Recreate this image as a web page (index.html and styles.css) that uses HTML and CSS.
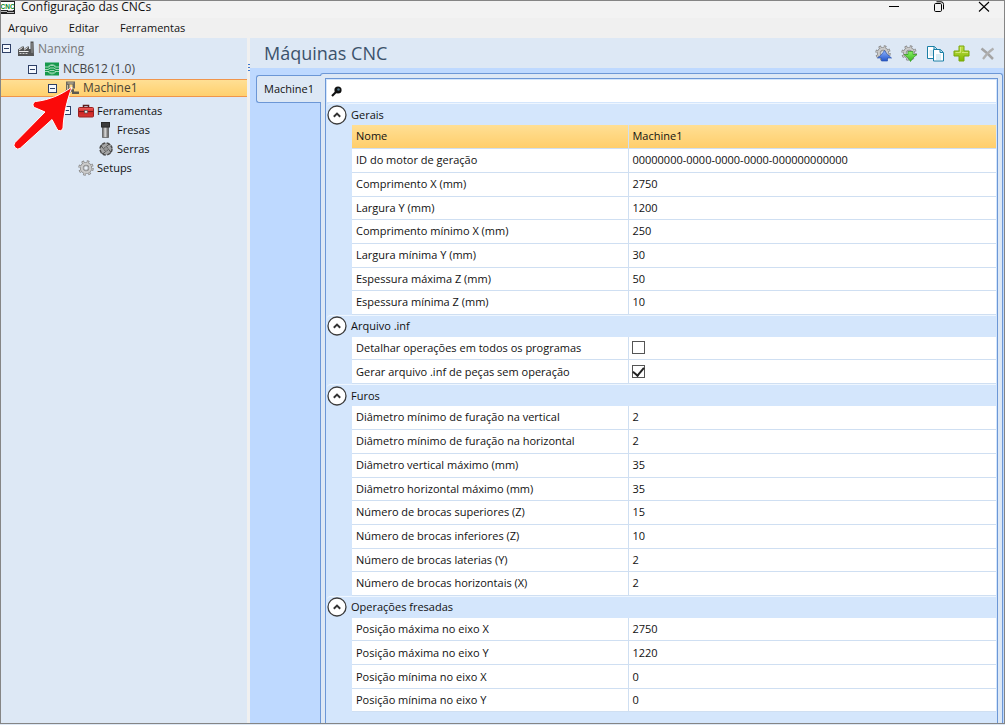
FILE: index.html
```html
<!DOCTYPE html>
<html lang="pt-BR">
<head>
<meta charset="utf-8">
<title>Configuração das CNCs</title>
<link rel="stylesheet" href="styles.css">
</head>
<body>
<svg width="0" height="0" class="defs" aria-hidden="true">
  <defs>
    <linearGradient id="blue" x1="0" y1="0" x2="0" y2="1"><stop offset="0" stop-color="#8db4ff"/><stop offset="1" stop-color="#2455c8"/></linearGradient>
    <linearGradient id="green" x1="0" y1="0" x2="0" y2="1"><stop offset="0" stop-color="#8af064"/><stop offset="1" stop-color="#35b41c"/></linearGradient>
    <linearGradient id="plus" x1="0" y1="0" x2="0" y2="1"><stop offset="0" stop-color="#c4e04c"/><stop offset="1" stop-color="#7fb800"/></linearGradient>
    <linearGradient id="steel" x1="0" y1="0" x2="1" y2="0"><stop offset="0" stop-color="#555"/><stop offset=".45" stop-color="#ddd"/><stop offset="1" stop-color="#4a4a4a"/></linearGradient>
    <linearGradient id="case" x1="0" y1="0" x2="0" y2="1"><stop offset="0" stop-color="#f0605c"/><stop offset=".5" stop-color="#cc2424"/><stop offset="1" stop-color="#d83a36"/></linearGradient>
    <symbol id="gear" viewBox="0 0 16 16">
      <g fill="none" stroke="#858585">
        <circle cx="8" cy="8" r="6.4" stroke-width="2.6" stroke-dasharray="2.5 2.526"/>
        <circle cx="8" cy="8" r="4.3" stroke-width="3.6"/>
        <circle cx="8" cy="8" r="6.2" stroke="#c9c9c9" stroke-width="1.6" stroke-dasharray="1.4 3.469" stroke-dashoffset="-.5"/>
        <circle cx="8" cy="8" r="4.3" stroke="#cbcbcb" stroke-width="2.2"/>
      </g>
      <circle cx="8" cy="8" r="2.3" fill="#e8eef6" stroke="#8a8a8a" stroke-width=".8"/>
    </symbol>
    <symbol id="chevron" viewBox="0 0 20 20">
      <circle cx="10" cy="10" r="9" fill="#fff" stroke="#3c3c3c" stroke-width="1.3"/>
      <path d="M6.8 11.8 10 8.6l3.2 3.2" fill="none" stroke="#333" stroke-width="2"/>
    </symbol>
  </defs>
</svg>
<div class="window">
  <header class="titlebar">
    <svg class="app-icon" width="14" height="13" viewBox="0 0 14 13" aria-hidden="true">
      <rect width="14" height="13" fill="#222"/><rect y="1" width="13" height="8" fill="#fff"/>
      <text x="-.5" y="7.6" font-size="6.5" class="app-icon-text">CNC</text>
      <path d="M0 10.5h6M7 9.5h5M6 11.5h7" stroke="#b8b8b8"/>
    </svg>
    <h1 class="app-title">Configuração das CNCs</h1>
    <div class="window-buttons">
      <button type="button" aria-label="Minimizar"><svg width="12" height="12" viewBox="0 0 12 12"><path d="M1 5.5h10" stroke="#000"/></svg></button>
      <button type="button" aria-label="Restaurar"><svg width="12" height="12" viewBox="0 0 12 12" fill="none" stroke="#000"><rect x="1.5" y="2.5" width="7" height="8" rx="1.2"/><path d="M3.5.8h4.5a2.5 2.5 0 0 1 2.5 2.5v5"/></svg></button>
      <button type="button" aria-label="Fechar"><svg width="12" height="12" viewBox="0 0 12 12"><path d="M1 1l10 9.500M11 1L1 10.500" stroke="#000" stroke-width="1.1"/></svg></button>
    </div>
  </header>
  <nav class="menubar">
    <button type="button">Arquivo</button>
    <button type="button">Editar</button>
    <button type="button">Ferramentas</button>
  </nav>
  <div class="workspace">
    <aside class="tree">
      <div class="node root"><button type="button" class="toggle" aria-label="Recolher Nanxing"></button>
        <svg width="16" height="16" viewBox="0 0 16 16"><path d="M0 15V8.500L4 5.500h2V8l3.500-2.500H11V8h1.500V.5h3L16 15z" fill="#555"/><path d="M1 9 4.500 6.500M6.200 9 9.700 6.500M1 10.500h9.500" stroke="#eee" stroke-width="1"/><path d="M1.500 12.500h9" stroke="#ccc" stroke-width="1.200" stroke-dasharray="2 1"/><path d="M14 2v10" stroke="#999"/></svg>
        <span>Nanxing</span></div>
      <div class="node controller"><button type="button" class="toggle" aria-label="Recolher NCB612"></button>
        <svg width="14" height="14" viewBox="0 0 14 14"><rect y=".5" width="14" height="13" fill="#17994c"/><g stroke="#b5e2c6" fill="none" stroke-width=".9"><path d="M0 5h3.500L5.500 3.500h3L10.500 5H14M0 7.500h3l2-1.500h4l2 1.500h3M0 9.500h4L5.500 11h3L10 9.500h4M4.500 8.500h5"/><path d="M3 4.500Q7 .5 11 4.500M3 10q4 4 8 0" stroke-width=".6"/></g></svg>
        <span>NCB612 (1.0)</span></div>
      <div class="node machine"><button type="button" class="toggle" aria-label="Recolher Machine1"></button>
        <svg width="14" height="14" viewBox="0 0 14 14"><path d="M1 .5h9v7H7.500v-4H4.500V9H6v3H0V9.500h1z" fill="#6c6960"/><path d="M2.500 2h6M2.500 4v5" stroke="#c9bfa4"/><path d="M6 9.500h3M7 11.800h7" stroke="#5d5a50" stroke-width="2.500"/></svg>
        <span>Machine1</span></div>
      <div class="children">
        <div class="node tools"><button type="button" class="toggle" aria-label="Recolher Ferramentas"></button>
          <svg width="16" height="14" viewBox="0 0 16 14"><path d="M5.500 4V1.500h5V4" fill="none" stroke="#5a1c1c" stroke-width="1.500"/><rect x=".5" y="3.500" width="15" height="9.500" rx="1" fill="url(#case)" stroke="#9a2020"/><path d="M1 7.500h14" stroke="#7b1717"/><rect x="6.500" y="6.500" width="3" height="2.500" fill="#eee" stroke="#555" stroke-width=".7"/></svg>
          <span>Ferramentas</span></div>
        <div class="node leaf">
          <svg width="14" height="16" viewBox="0 0 14 16"><path d="M3.500 5h6v10.500h-6z" fill="url(#steel)" stroke="#555" stroke-width=".7"/><rect x="2.500" y=".5" width="8" height="4.500" fill="#3c3c3c" stroke="#2a2a2a"/></svg>
          <span>Fresas</span></div>
        <div class="node leaf">
          <svg width="14" height="14" viewBox="0 0 14 14"><circle cx="7" cy="7" r="6" fill="#a5a5a5" stroke="#4c4c4c" stroke-width="1.500" stroke-dasharray="3.200 1.510"/><path d="M7.500 4.500Q8.500 2 11.500 2.500M9.500 7.500q2.500 1 2 4M6.500 9.500q-1 2.500-4 2M4.500 6.500Q2 5.500 2.500 2.500" fill="none" stroke="#444" stroke-width=".9"/><circle cx="7" cy="7" r="2" fill="#e4e4e4" stroke="#444" stroke-width=".8"/><circle cx="7" cy="7" r=".8" fill="#333"/></svg>
          <span>Serras</span></div>
        <div class="node setups">
          <svg width="16" height="16"><use href="#gear"/></svg>
          <span>Setups</span></div>
      </div>
      <svg class="pointer" width="62" height="66" viewBox="0 0 62 66" aria-hidden="true"><path d="M59 3C48 11 36 16 22.500 17.500a3.300 3.300 0 0 0-1 6L32 28 2 58.500a3.900 3.900 0 0 0 5.500 5.500L39 35.500l5 9.500a3.200 3.200 0 0 0 6-1C50.500 31 54 16 59 3z" fill="#fb0a0a" stroke="#fff" stroke-width="1"/></svg>
    </aside>
    <div class="splitter"><span></span></div>
    <main class="panel">
      <div class="panel-head">
        <h2>Máquinas CNC</h2>
        <div class="actions">
          <button type="button" aria-label="Exportar"><svg width="17" height="17" viewBox="0 0 17 17"><use href="#gear" width="16" height="16"/><path d="M9.500 5.500Q12 10 16.500 13h-4v3h-6v-3h-4Q7 10 9.500 5.500z" fill="url(#blue)" stroke="#2c55b0" stroke-width=".7"/></svg></button>
          <button type="button" aria-label="Importar"><svg width="17" height="17" viewBox="0 0 17 17"><use href="#gear" width="16" height="16"/><path d="M9.500 16.500Q7.500 12.500 3 9.500h4v-3h5v3h4Q11.500 12.500 9.500 16.500z" fill="url(#green)" stroke="#32981e" stroke-width=".7"/></svg></button>
          <button type="button" aria-label="Copiar"><svg width="17" height="17" viewBox="0 0 17 17" fill="#fff" stroke="#1b7fa6"><path d="M.5 1.500h7l3 3v9H.5z"/><path d="M7 1.500v3h3" fill="#bfe3f2"/><path d="M2.500 6h4M2.500 8h4M2.500 10h4" stroke="#a9d2e2"/><path d="M6.500 4.500h7l3 3v8.500h-10z"/><path d="M13 4.500v3h3" fill="#bfe3f2"/><path d="M9 10h5M9 12h5M9 14h5" stroke="#b4dbe8"/></svg></button>
          <button type="button" aria-label="Adicionar"><svg width="17" height="17" viewBox="0 0 17 17"><path d="M6 1h5v5h5v5h-5v5H6v-5H1V6h5z" fill="url(#plus)" stroke="#79a60b"/><path d="M7.500 2v5.500H2.500M9 7.500h6" stroke="#dcf08a" fill="none" stroke-width=".8"/></svg></button>
          <button type="button" aria-label="Excluir"><svg width="17" height="17" viewBox="0 0 17 17"><path d="M2.500 3.500 8.500 8.500 14 14" fill="none" stroke="#a4a4a4" stroke-width="2.500"/><path d="M14.500 3.500Q9 7 4 14" fill="none" stroke="#b0b0b0" stroke-width="2.200"/></svg></button>
        </div>
      </div>
      <div class="tabs">
        <button type="button" class="tab">Machine1</button>
        <div class="page">
          <div class="properties">
            <label class="search"><svg width="11" height="11" viewBox="0 0 11 11"><circle cx="7" cy="4" r="3.600" fill="#111"/><path d="M5 6 1 10" stroke="#111" stroke-width="2.200"/><circle cx="7.500" cy="3.500" r="1.300" fill="#52788c"/></svg><input type="text" aria-label="Pesquisar"></label>
            <section class="group">
              <h3><button type="button" aria-label="Recolher"><svg width="20" height="20"><use href="#chevron"/></svg></button>Gerais</h3>
              <table>
                <tr class="selected"><th scope="row">Nome</th><td>Machine1</td></tr>
                <tr><th scope="row">ID do motor de geração</th><td>00000000-0000-0000-0000-000000000000</td></tr>
                <tr><th scope="row">Comprimento X (mm)</th><td>2750</td></tr>
                <tr><th scope="row">Largura Y (mm)</th><td>1200</td></tr>
                <tr><th scope="row">Comprimento mínimo X (mm)</th><td>250</td></tr>
                <tr><th scope="row">Largura mínima Y (mm)</th><td>30</td></tr>
                <tr><th scope="row">Espessura máxima Z (mm)</th><td>50</td></tr>
                <tr><th scope="row">Espessura mínima Z (mm)</th><td>10</td></tr>
              </table>
            </section>
            <section class="group">
              <h3><button type="button" aria-label="Recolher"><svg width="20" height="20"><use href="#chevron"/></svg></button>Arquivo .inf</h3>
              <table>
                <tr><th scope="row"><label for="detail">Detalhar operações em todos os programas</label></th><td><input type="checkbox" id="detail"></td></tr>
                <tr><th scope="row"><label for="inf">Gerar arquivo .inf de peças sem operação</label></th><td><input type="checkbox" id="inf" checked></td></tr>
              </table>
            </section>
            <section class="group">
              <h3><button type="button" aria-label="Recolher"><svg width="20" height="20"><use href="#chevron"/></svg></button>Furos</h3>
              <table>
                <tr><th scope="row">Diâmetro mínimo de furação na vertical</th><td>2</td></tr>
                <tr><th scope="row">Diâmetro mínimo de furação na horizontal</th><td>2</td></tr>
                <tr><th scope="row">Diâmetro vertical máximo (mm)</th><td>35</td></tr>
                <tr><th scope="row">Diâmetro horizontal máximo (mm)</th><td>35</td></tr>
                <tr><th scope="row">Número de brocas superiores (Z)</th><td>15</td></tr>
                <tr><th scope="row">Número de brocas inferiores (Z)</th><td>10</td></tr>
                <tr><th scope="row">Número de brocas laterias (Y)</th><td>2</td></tr>
                <tr><th scope="row">Número de brocas horizontais (X)</th><td>2</td></tr>
              </table>
            </section>
            <section class="group">
              <h3><button type="button" aria-label="Recolher"><svg width="20" height="20"><use href="#chevron"/></svg></button>Operações fresadas</h3>
              <table>
                <tr><th scope="row">Posição máxima no eixo X</th><td>2750</td></tr>
                <tr><th scope="row">Posição máxima no eixo Y</th><td>1220</td></tr>
                <tr><th scope="row">Posição mínima no eixo X</th><td>0</td></tr>
                <tr><th scope="row">Posição mínima no eixo Y</th><td>0</td></tr>
              </table>
            </section>
          </div>
        </div>
      </div>
    </main>
  </div>
</div>
</body>
</html>
```
FILE: styles.css
```css
* { box-sizing: border-box; }

body {
  margin: 0;
  background: #dde8f5;
  color: #111;
  font: 11px/16px "Open Sans", "Noto Sans", sans-serif;
}

h1, h2, h3 { margin: 0; font-weight: 400; }
button { padding: 0; border: 0; background: none; color: inherit; font: inherit; }
svg { display: block; flex: none; }
.defs { position: absolute; }

.window {
  display: flex;
  flex-direction: column;
  min-height: calc(100vh - 1px);
  border: 1px solid #858585;
}

.titlebar {
  display: flex;
  align-items: center;
  height: 17px;
  padding-bottom: 5px;
  background: #f3f3f3;
}
.app-icon-text { fill: #0a8a2a; font-family: "Liberation Sans", sans-serif; font-weight: 700; }
.app-title { flex: 1; margin-left: 6px; font-size: 12px; line-height: 12px; }
.window-buttons { display: flex; gap: 33px; padding-right: 14px; }

.menubar {
  display: flex;
  align-items: center;
  gap: 21px;
  height: 20px;
  padding-left: 7px;
  background: #f0f0f0;
}

.workspace { display: flex; flex: 1; }

.tree {
  position: relative;
  flex: none;
  width: 246px;
  background: #dde8f5;
  font-size: 12px;
}
.node { display: flex; align-items: center; gap: 4px; height: 19px; }
.toggle {
  flex: none;
  width: 9px;
  height: 9px;
  border: 1px solid #2d3f66;
  background: linear-gradient(#2d3f66, #2d3f66) center / 5px 1px no-repeat #f4f8fd;
}
.root { height: 21px; padding-left: 1px; color: #777; }
.root .toggle { margin-right: 3px; }
.controller { height: 20px; padding-left: 27px; color: #444; }
.controller .toggle { margin-right: 4px; }
.machine {
  height: 18px;
  padding-left: 47px;
  border: solid #f0954b;
  border-width: 1px 0;
  background: linear-gradient(#ffdf94, #ffd06e);
  color: #4a4436;
}
.machine .toggle { margin-right: 4px; }
.children { padding-top: 4px; font-size: 11px; }
.tools { gap: 3px; padding-left: 61px; }
.tools .toggle { margin-right: 4px; }
.leaf { padding-left: 98px; }
.setups { gap: 3px; padding-left: 77px; }
.pointer { position: absolute; top: 46px; left: 12px; }

.splitter { flex: none; width: 3px; padding-top: 26px; background: #f0f0f0; }
.splitter span { display: block; width: 2px; height: 9px; margin-left: 1px; background: repeating-linear-gradient(#3f78d0 0 1px, transparent 1px 3px); }

.panel { display: flex; flex: 1; flex-direction: column; min-width: 0; background: #bed9ff; }
.panel-head {
  display: flex;
  align-items: center;
  justify-content: space-between;
  height: 30px;
  padding: 0 8px 0 14px;
  background: #dde8f5;
}
.panel-head h2 { color: #3b526b; font-size: 18px; line-height: 24px; }
.actions { display: flex; gap: 9px; }

.tabs { display: flex; flex: 1; align-items: flex-start; padding: 5px 1px 0 6px; }
.tab {
  z-index: 1;
  width: 65px;
  height: 28px;
  margin: 2px -1px 0 0;
  border: 1px solid #6c97d6;
  border-right: 0;
  border-radius: 3px 0 0 3px;
  background: #dde8f5;
}
.page {
  display: flex;
  flex: 1;
  align-self: stretch;
  min-width: 0;
  padding: 4px 4px 0;
  border: 1px solid #6c97d6;
  border-bottom: 0;
  border-radius: 3px 3px 0 0;
  background: #dde8f5;
}
.properties {
  flex: 1;
  min-width: 0;
  padding: 1px 1px 0;
  border: 1px solid #6c97d6;
  border-bottom: 0;
  background: #d4e6fc;
}
.search { display: flex; align-items: center; gap: 6px; height: 22px; margin-bottom: 1px; padding-left: 4px; background: #fff; }
.search input { flex: 1; min-width: 0; padding: 0; border: 0; outline: 0; background: none; font: inherit; }

.group { padding-left: 25px; border-top: 1px solid #eef6ff; border-radius: 4px 0 0 4px; }
.group h3 { display: flex; align-items: center; gap: 4px; height: 21px; margin-left: -25px; font-size: 11px; }

table { width: 100%; border-collapse: collapse; table-layout: fixed; background: #fff; }
tr { height: 24px; }
tr:nth-child(3n + 1) { height: 23px; }
th, td { padding: 0 4px; border-bottom: 1px solid #cfdff2; font-weight: 400; line-height: 16px; text-align: left; }
td { padding-left: 3px; }
th { width: 43%; border-right: 1px solid #cfdff2; }
.selected { background: linear-gradient(#ffdf94, #ffce6b); }

input[type="checkbox"] {
  display: grid;
  place-items: center;
  width: 13px;
  height: 13px;
  margin: 0;
  border: 1px solid #555;
  background: #fff;
  appearance: none;
}
input[type="checkbox"]:checked::after {
  width: 5px;
  height: 9px;
  margin-top: -2px;
  border: solid #222;
  border-width: 0 2px 2px 0;
  content: "";
  transform: rotate(40deg);
}
```
